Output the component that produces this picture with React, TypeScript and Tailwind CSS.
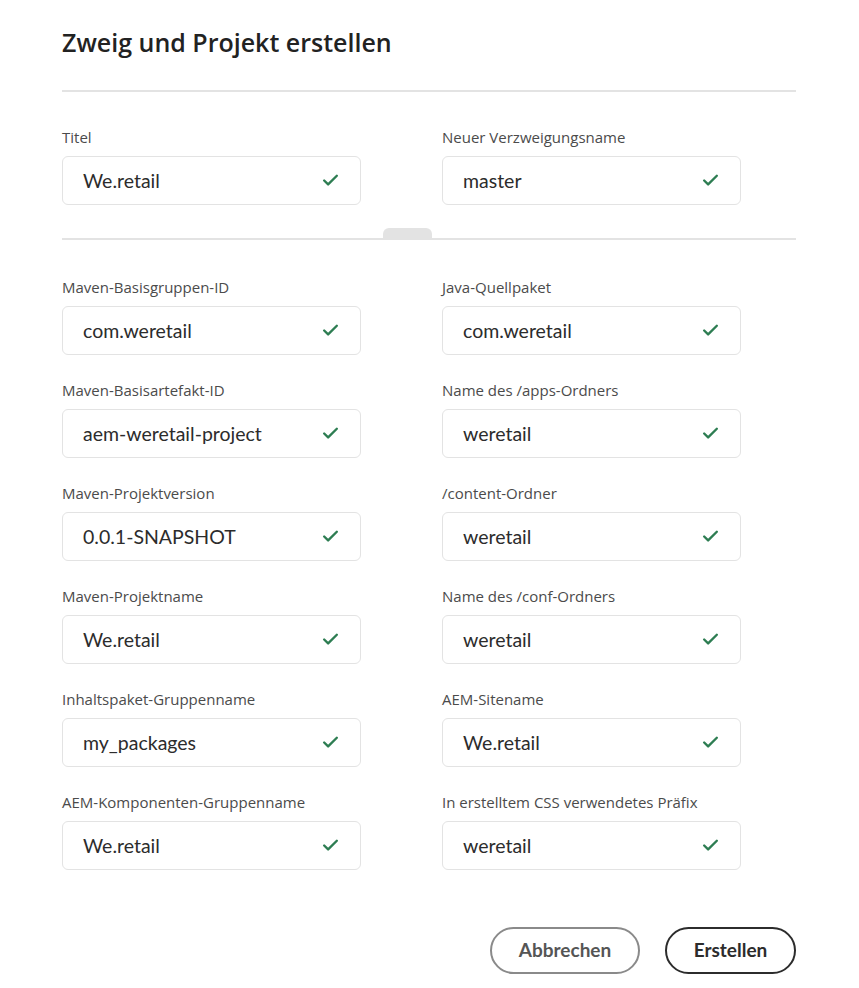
import { Check } from 'lucide-react'

const top = [
  { label: 'Titel', value: 'We.retail' },
  { label: 'Neuer Verzweigungsname', value: 'master' },
]

const fields = [
  { label: 'Maven-Basisgruppen-ID', value: 'com.weretail' },
  { label: 'Java-Quellpaket', value: 'com.weretail' },
  { label: 'Maven-Basisartefakt-ID', value: 'aem-weretail-project' },
  { label: 'Name des /apps-Ordners', value: 'weretail' },
  { label: 'Maven-Projektversion', value: '0.0.1-SNAPSHOT' },
  { label: '/content-Ordner', value: 'weretail' },
  { label: 'Maven-Projektname', value: 'We.retail' },
  { label: 'Name des /conf-Ordners', value: 'weretail' },
  { label: 'Inhaltspaket-Gruppenname', value: 'my_packages' },
  { label: 'AEM-Sitename', value: 'We.retail' },
  { label: 'AEM-Komponenten-Gruppenname', value: 'We.retail' },
  { label: 'In erstelltem CSS verwendetes Präfix', value: 'weretail' },
]

function Field({ label, value }: { label: string; value: string }) {
  return (
    <div className="flex flex-col">
      <label className="text-[15px] leading-5 text-[#4b4b4b] font-['Open_Sans',sans-serif] whitespace-nowrap">{label}</label>
      <div className="mt-[9px] h-[49px] rounded-md border border-[#e3e3e3] bg-white flex items-center pl-5 pr-[20px]">
        <span className="flex-1 text-[19.5px] text-[#2c2c2c]">{value}</span>
        <Check className="w-[19px] h-[19px] text-[#2d7d52]" strokeWidth={3} />
      </div>
    </div>
  )
}

export default function App() {
  return (
    <div className="w-[859px] h-[988px] bg-white px-[62px] pt-[26px] font-['Lato',sans-serif]">
      <h1 className="text-[25px] leading-8 font-semibold text-[#222] font-['Open_Sans',sans-serif]">Zweig und Projekt erstellen</h1>
      <div className="mt-[32px] w-[734px] h-[2px] bg-[#e3e3e3]" />

      <div className="mt-[35px] grid grid-cols-[299px_299px] gap-x-[81px]">
        {top.map(f => <Field key={f.label} {...f} />)}
      </div>

      {/* splitter with handle */}
      <div className="mt-[23px] w-[734px] flex flex-col items-center">
        <div className="ml-[-43px] w-[49px] h-[10px] rounded-t-md bg-[#e3e3e3]" />
        <div className="w-full h-[2px] bg-[#e3e3e3]" />
      </div>

      <div className="mt-[37px] grid grid-cols-[299px_299px] gap-x-[81px] gap-y-[25px]">
        {fields.map(f => <Field key={f.label} {...f} />)}
      </div>

      <div className="mt-[57px] w-[734px] flex justify-end gap-[25px]">
        <button className="h-[47px] w-[150px] rounded-full border-2 border-[#8a8a8a] text-[19px] font-bold text-[#555]">Abbrechen</button>
        <button className="h-[47px] w-[131px] rounded-full border-2 border-[#2c2c2c] text-[19px] font-bold text-[#2c2c2c]">Erstellen</button>
      </div>
    </div>
  )
}
